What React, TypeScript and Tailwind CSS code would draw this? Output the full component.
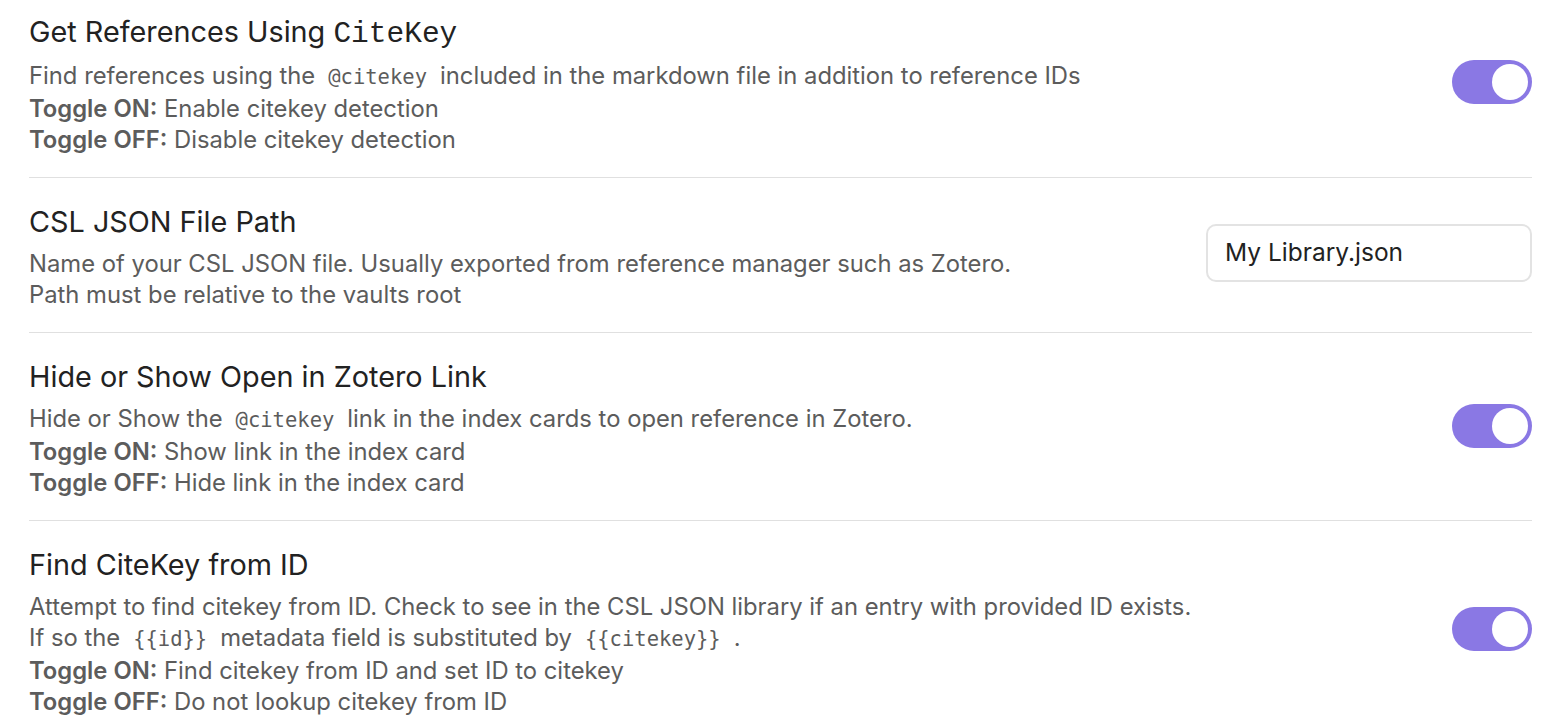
import React from "react";

const Code = ({ children }: { children: React.ReactNode }) => (
  <code className="mx-[13px] font-['DejaVu_Sans_Mono',monospace] text-[20.5px] text-[#5c5c5c]">{children}</code>
);

const B = ({ children }: { children: React.ReactNode }) => (
  <span className="font-semibold">{children}</span>
);

const Toggle = () => (
  <div className="mb-[7px] flex h-[44px] w-[80px] shrink-0 items-center justify-end rounded-full bg-[#8a78e4] p-[4px]">
    <div className="h-[36px] w-[36px] rounded-full bg-white" />
  </div>
);

const Row = ({
  title,
  children,
  control,
  first,
  last,
}: {
  title: React.ReactNode;
  children: React.ReactNode;
  control: React.ReactNode;
  first?: boolean;
  last?: boolean;
}) => (
  <div
    className={`flex items-center justify-between ${first ? "pt-[15px]" : "pt-[27px]"} pb-[22px] ${
      last ? "" : "border-b border-[#e0e0e0]"
    }`}
  >
    <div className="flex flex-col">
      <div className="text-[28.8px] leading-[34px] text-[#222222]">{title}</div>
      <div className="mt-[9px] text-[23.8px] leading-[31px] text-[#5c5c5c]">{children}</div>
    </div>
    {control}
  </div>
);

export default function App() {
  return (
    <div className="min-h-screen bg-white font-['Inter',sans-serif]">
      <div className="ml-[29px] w-[1503px]">
        <Row
          first
          title={
            <>
              Get References Using{" "}
              <span className="font-['Liberation_Mono',monospace] text-[29.5px]">CiteKey</span>
            </>
          }
          control={<Toggle />}
        >
          <div>
            Find references using the<Code>@citekey</Code>included in the markdown file in addition to reference IDs
          </div>
          <div>
            <B>Toggle ON:</B> Enable citekey detection
          </div>
          <div>
            <B>Toggle OFF:</B> Disable citekey detection
          </div>
        </Row>
        <Row
          title="CSL JSON File Path"
          control={
            <div className="mb-[10px] flex h-[58px] w-[326px] shrink-0 items-center rounded-[10px] border-2 border-[#e3e3e3] px-[17px] text-[24.5px] text-[#222222]">
              My Library.json
            </div>
          }
        >
          <div>Name of your CSL JSON file. Usually exported from reference manager such as Zotero.</div>
          <div>Path must be relative to the vaults root</div>
        </Row>
        <Row title="Hide or Show Open in Zotero Link" control={<Toggle />}>
          <div>
            Hide or Show the<Code>@citekey</Code>link in the index cards to open reference in Zotero.
          </div>
          <div>
            <B>Toggle ON:</B> Show link in the index card
          </div>
          <div>
            <B>Toggle OFF:</B> Hide link in the index card
          </div>
        </Row>
        <Row last title="Find CiteKey from ID" control={<Toggle />}>
          <div>
            Attempt to find citekey from ID. Check to see in the CSL JSON library if an entry with provided ID exists.
          </div>
          <div>
            If so the<Code>{"{{id}}"}</Code>metadata field is substituted by<Code>{"{{citekey}}"}</Code>.
          </div>
          <div>
            <B>Toggle ON:</B> Find citekey from ID and set ID to citekey
          </div>
          <div>
            <B>Toggle OFF:</B> Do not lookup citekey from ID
          </div>
        </Row>
      </div>
    </div>
  );
}
